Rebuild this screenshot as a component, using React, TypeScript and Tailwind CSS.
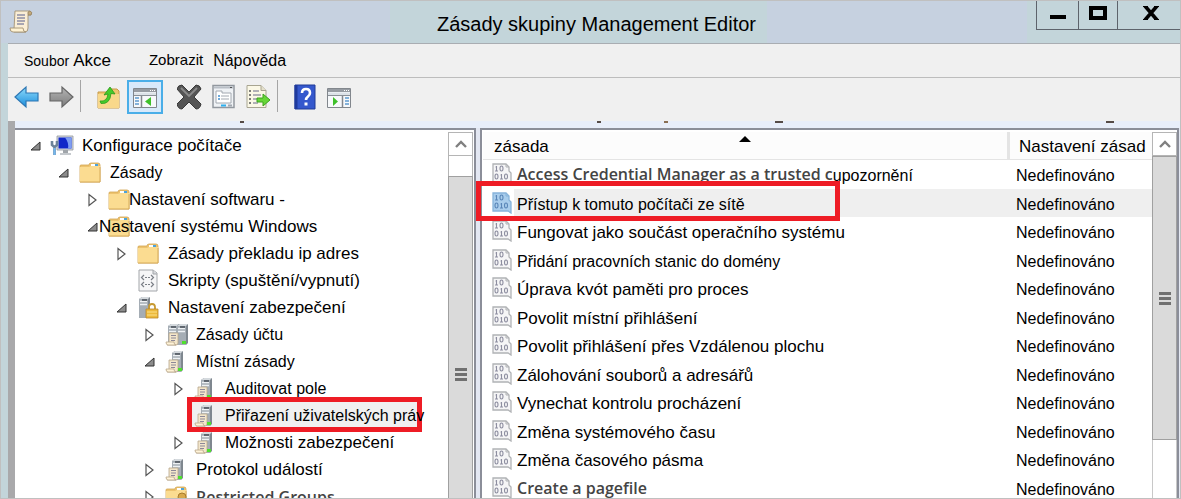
import type { ReactNode } from 'react';
import { clsx } from 'clsx';

type TreeIconName =
  | 'computer'
  | 'folder'
  | 'script'
  | 'lock'
  | 'servers'
  | 'server'
  | 'group';

interface TreeItem {
  label: string;
  icon: TreeIconName;
  level: string;
  state?: 'open' | 'closed';
  text?: string;
  selected?: boolean;
}

const english = "text-base font-semibold text-[#444] font-['Open_Sans',sans-serif]";

const treeItems: TreeItem[] = [
  { label: 'Konfigurace počítače', icon: 'computer', level: 'pl-[15px]', state: 'open', text: 'text-[17px]' },
  { label: 'Zásady', icon: 'folder', level: 'pl-[43px]', state: 'open' },
  { label: 'Nastavení softwaru -', icon: 'folder', level: 'pl-[72px]', state: 'closed', text: 'text-[17px] -ml-2.5' },
  { label: 'Nastavení systému Windows', icon: 'folder', level: 'pl-[72px]', state: 'open', text: 'text-[17px] -ml-10' },
  { label: 'Zásady překladu ip adres', icon: 'folder', level: 'pl-[101px]', state: 'closed', text: 'text-[17px]' },
  { label: 'Skripty (spuštění/vypnutí)', icon: 'script', level: 'pl-[101px]', text: 'text-[17px]' },
  { label: 'Nastavení zabezpečení', icon: 'lock', level: 'pl-[101px]', state: 'open', text: 'text-[17px]' },
  { label: 'Zásady účtu', icon: 'servers', level: 'pl-[129px]', state: 'closed' },
  { label: 'Místní zásady', icon: 'server', level: 'pl-[129px]', state: 'open' },
  { label: 'Auditovat pole', icon: 'server', level: 'pl-[158px]', state: 'closed' },
  { label: 'Přiřazení uživatelských práv', icon: 'server', level: 'pl-[158px]', selected: true },
  { label: 'Možnosti zabezpečení', icon: 'server', level: 'pl-[158px]', state: 'closed', text: 'text-[17px]' },
  { label: 'Protokol událostí', icon: 'server', level: 'pl-[129px]', state: 'closed', text: 'text-[17px]' },
  { label: 'Restricted Groups', icon: 'group', level: 'pl-[129px]', state: 'closed', text: english },
];

interface Policy {
  name: string;
  suffix?: string;
  text?: string;
  selected?: boolean;
}

const policies: Policy[] = [
  { name: 'Access Credential Manager as a trusted c', suffix: 'upozornění', text: english },
  { name: 'Přístup k tomuto počítači ze sítě', selected: true },
  { name: 'Fungovat jako součást operačního systému', text: 'pt-1 text-[17px]' },
  { name: 'Přidání pracovních stanic do domény' },
  { name: 'Úprava kvót paměti pro proces', text: 'pt-1 text-[17px]' },
  { name: 'Povolit místní přihlášení', text: 'pt-1 text-[17px]' },
  { name: 'Povolit přihlášení přes Vzdálenou plochu', text: 'pt-1 text-[17px]' },
  { name: 'Zálohování souborů a adresářů', text: 'pt-1 text-[17px]' },
  { name: 'Vynechat kontrolu procházení', text: 'pt-1 text-[17px]' },
  { name: 'Změna systémového času', text: 'pt-1 text-[17px]' },
  { name: 'Změna časového pásma', text: 'pt-1 text-[17px]' },
  { name: 'Create a pagefile', text: english },
];

const ServerTower = ({ x }: { x: number }) => (
  <g>
    <path d={`M${x} 3l3-2h8v19l-2 2h-9z`} fill="#7f878f" />
    <path d={`M${x} 3l3-2h8l-2 2z`} fill="#d5dade" />
    <path d={`M${x} 3h9v19h-9z`} fill="#a5adb5" />
    <path d={`M${x + 1} 5.500h7M${x + 1} 8.500h7`} stroke="#eef1f4" strokeWidth="1.6" />
    <path d={`M${x + 3} 4h5`} stroke="#3f474f" strokeWidth="1.4" />
  </g>
);

const PolicyScroll = () => (
  <g>
    <path d="M5 10h9v10q0 2-2 2H3q2-1 2-3z" fill="#f3e6cb" stroke="#b8a68a" strokeWidth=".8" />
    <path d="M2 19h8q0 3 2 3H4q-2 0-2-3z" fill="#fff3d8" stroke="#b8a68a" strokeWidth=".8" />
    <path d="M7 12.500h5M7 15h5M7 17.500h4" stroke="#8c8797" strokeWidth="1" />
  </g>
);

const FolderShape = () => (
  <g>
    <path d="M11 4q0-2 2-2h7q2 0 2 2v17H2V5q0-1 1-1z" fill="#edc36f" stroke="#d2a552" strokeWidth=".8" />
    <path d="M2 6h9l2-1h9v16H2z" fill="#fbdc91" />
    <path d="M13 3h7v2h-7z" fill="#fff" />
    <path d="M17 3h3v2h-3z" fill="#4ba3dc" />
    <path d="M2 21h20V6" fill="none" stroke="#d2a552" strokeWidth=".9" />
  </g>
);

const treeIcons: Record<TreeIconName, ReactNode> = {
  computer: (
    <g>
      <path d="M7 2h16v14H7z" fill="#d9dcdf" stroke="#8f959b" strokeWidth=".8" />
      <path d="M8.500 3.500h13v11h-13z" fill="#1127c9" />
      <path d="M15 3.500h6.500v11H18q1-6-3-11z" fill="#7d9df2" />
      <path d="M13 16h5v3h-5z" fill="#a0a5aa" />
      <path d="M10 19h11v2H10z" fill="#c5c9cd" />
      <path d="M2 7v4l2.500 2L7 11V7M4.500 12v9" fill="none" stroke="#6d8399" strokeWidth="2.600" />
      <path d="M4.500 14v7" stroke="#74b7ed" strokeWidth="2.200" />
    </g>
  ),
  folder: <FolderShape />,
  script: (
    <g>
      <path d="M3 1h14l4 3v18H3z" fill="#f6f6f7" stroke="#a3a6aa" />
      <path d="M17 1v4h4" fill="#d8dadd" stroke="#a3a6aa" />
      <path d="M8 6L5.500 8.500 8 11M15 6l2.500 2.500L15 11M8 13l-2.500 2.500L8 18M15 13l2.500 2.500L15 18" fill="none" stroke="#7b7f86" strokeWidth="1.200" />
      <path d="M9 8.500h5M9 15.500h5" stroke="#7b7f86" strokeDasharray="2 1" />
    </g>
  ),
  lock: (
    <g>
      <ServerTower x={3} />
      <path d="M13 14v-3q0-3 3-3t3 3v3" fill="none" stroke="#c79a32" strokeWidth="1.800" />
      <path d="M10 13h12v9H10z" fill="#edba3c" stroke="#b9862a" strokeWidth=".8" />
      <path d="M11 16h10M11 19h10" stroke="#fbe08a" />
    </g>
  ),
  servers: (
    <g>
      <ServerTower x={4} />
      <ServerTower x={13} />
      <PolicyScroll />
      <path d="M18 18h4v3h-4z" fill="#4ee02d" />
    </g>
  ),
  server: (
    <g>
      <ServerTower x={8} />
      <PolicyScroll />
      <path d="M14 18h4v3h-4z" fill="#4ee02d" />
    </g>
  ),
  group: (
    <g>
      <FolderShape />
      <circle cx="18" cy="12" r="4" fill="#d9a94b" stroke="#a97b2c" />
    </g>
  ),
};

const Expander = ({ state }: { state?: 'open' | 'closed' }) => (
  <svg viewBox="0 0 12 14" className="h-[14px] w-3 flex-none">
    {state === 'open' && <path d="M10 3v8H1z" fill="#8c8c8c" stroke="#333" />}
    {state === 'closed' && (
      <path d="M2 1.500v11L9 7z" fill="#fff" stroke="#555" strokeWidth="1.200" />
    )}
  </svg>
);

const PolicyIcon = ({ selected }: { selected?: boolean }) => (
  <svg viewBox="0 0 20 22" className="h-[22px] w-5 flex-none">
    <path
      d="M1 1h13l3 3v4l2 2v11l-3-2H1z"
      fill={selected ? '#a9cdec' : '#f5f5f6'}
      stroke={selected ? '#86b3da' : '#b0b2b5'}
      strokeWidth="1.300"
    />
    <path d="M14 1v3h3" fill="none" stroke={selected ? '#86b3da' : '#b0b2b5'} />
    <g fill="none" stroke={selected ? '#5a86b8' : '#8d8ea0'} strokeWidth="1.100">
      <path d="M4.500 3v5M3.500 4h1M3 8h3" />
      <ellipse cx="9.500" cy="5.500" rx="1.500" ry="2.500" />
      <ellipse cx="4.500" cy="13.500" rx="1.500" ry="2.500" />
      <path d="M9.500 11v5M8.500 12h1M8 16h3" />
      <ellipse cx="14" cy="13.500" rx="1.500" ry="2.500" />
    </g>
  </svg>
);

const TitleScroll = () => (
  <svg viewBox="0 0 24 24" className="h-6 w-6 flex-none">
    <path d="M6 1h15q2 1 1 4h-3v13q0 4-3 4H5q-1-1 0-3z" fill="#faeed6" stroke="#a39274" strokeWidth=".9" />
    <path d="M19 5q-1-4 2-4 3 1 1 4z" fill="#c4ab7d" stroke="#8f7d5d" strokeWidth=".7" />
    <path d="M1 18h13q0 4 3 4H4q-3 0-3-4z" fill="#fff2d2" stroke="#a39274" strokeWidth=".9" />
    <path d="M8 5h8M8 8h8M8 11h8M8 14h7" stroke="#8d8fa6" strokeWidth="1.300" />
  </svg>
);

const ToolSvg = ({ children }: { children: ReactNode }) => (
  <svg viewBox="0 0 26 26" className="h-[26px] w-[26px]">
    {children}
  </svg>
);

const BackIcon = () => (
  <ToolSvg>
    <defs>
      <linearGradient id="back" x1="0" y1="0" x2="0" y2="1">
        <stop offset="0" stopColor="#8fdcfb" />
        <stop offset="1" stopColor="#1b8ddc" />
      </linearGradient>
    </defs>
    <path d="M1 13L12 3v6h12v8H12v6z" fill="url(#back)" stroke="#2d77b4" strokeWidth="1.200" />
  </ToolSvg>
);

const ForwardIcon = () => (
  <ToolSvg>
    <defs>
      <linearGradient id="forward" x1="0" y1="0" x2="0" y2="1">
        <stop offset="0" stopColor="#b5b5b5" />
        <stop offset="1" stopColor="#7c7c7c" />
      </linearGradient>
    </defs>
    <path d="M25 13L14 3v6H2v8h12v6z" fill="url(#forward)" stroke="#666" strokeWidth="1.200" />
  </ToolSvg>
);

const UpFolderIcon = () => (
  <ToolSvg>
    <path d="M3 8h9l2-3h8l2 2v17H3z" fill="#eec56f" stroke="#c69a48" />
    <path d="M3 10h21v14H3z" fill="#f9d88b" />
    <path d="M5 17q7 1 8-7l-4 1 6-8 5 7-4-.5q-1 11-10 10z" fill="#45cb2c" stroke="#2b9a1b" strokeWidth=".8" />
  </ToolSvg>
);

const TreeWindowIcon = ({ flipped }: { flipped?: boolean }) => (
  <ToolSvg>
    <path d="M1.500 4.500h23v19h-23z" fill="#f7f9fb" stroke="#82878d" />
    <path d="M2 5h22v3H2z" fill="#969ba2" />
    <path d="M18 6.500h1M20 6.500h1M22 6.500h1" stroke="#fff" />
    <path d="M2 8.500h22v3H2z" fill="#dce2e8" />
    <path d="M2 11.500h22" stroke="#8a9097" />
    {flipped ? (
      <g>
        <path d="M16.500 12v11" stroke="#82878d" strokeWidth="1.500" />
        <path d="M19 14h4M19 17h4M19 20h4" stroke="#5f9bd0" strokeWidth="1.500" />
        <path d="M7 13v9l5-4.500z" fill="#3fc02b" />
      </g>
    ) : (
      <g>
        <path d="M9.500 12v11" stroke="#82878d" strokeWidth="1.500" />
        <path d="M3 14h4M3 17h4M3 20h4" stroke="#5f9bd0" strokeWidth="1.500" />
        <path d="M19 13v9l-6-4.500z" fill="#3fc02b" />
      </g>
    )}
  </ToolSvg>
);

const DeleteIcon = () => (
  <ToolSvg>
    <path
      d="M5 1l7 7 7-7q4 0 5 4l-7 8 7 7q-1 5-5 5l-7-7-7 7q-4 0-5-5l7-7-7-8q1-4 5-4z"
      fill="#555"
      stroke="#3a3a3a"
      strokeLinejoin="round"
    />
    <path d="M4 4l8 8 8-8" fill="none" stroke="#8b8b8b" strokeWidth="1.800" />
  </ToolSvg>
);

const PropertiesIcon = () => (
  <ToolSvg>
    <path d="M2 1.500h21v22H2z" fill="#eff2f5" stroke="#92989f" strokeWidth="1.500" />
    <path d="M3 3.500h19" stroke="#b9bfc6" strokeWidth="2" />
    <path d="M19 3.500h2" stroke="#555" />
    <path d="M5 7h6v2h9v10H5z" fill="#fff" stroke="#a2a8b0" />
    <path d="M7 12h2M7 15h2" stroke="#3f8fd0" strokeWidth="1.500" />
    <path d="M10 12h8M10 15h8" stroke="#a2a8b0" />
    <path d="M10 21.500h5" stroke="#2fb1ef" strokeWidth="2" />
    <path d="M17 21.500h4" stroke="#a2a8b0" strokeWidth="2" />
  </ToolSvg>
);

const ExportIcon = () => (
  <ToolSvg>
    <path d="M2 1.500h14l5 5v17H2z" fill="#fbf8e6" stroke="#a8a591" />
    <path d="M16 1.500v5h5" fill="#e4e0cb" stroke="#a8a591" />
    <path d="M4 7h2M4 11h2M4 15h2M4 19h2" stroke="#555" strokeWidth="1.500" />
    <path d="M8 7h6M8 11h8M8 15h5M8 19h5" stroke="#9b99a6" strokeWidth="1.300" />
    <path d="M12 14h6v-4l7 6-7 6v-4h-6z" fill="#66d636" stroke="#3ca41f" />
  </ToolSvg>
);

const HelpIcon = () => (
  <ToolSvg>
    <path d="M3 1h20v24H3z" fill="#3558cd" stroke="#203a96" />
    <path d="M4 1v24" stroke="#1f3a9d" strokeWidth="3" />
    <path d="M10 9q0-4 4-4t4 4q0 2-2 3.500T14 16" fill="none" stroke="#fff" strokeWidth="2.600" />
    <path d="M12.500 18.500h3v3h-3z" fill="#fff" />
  </ToolSvg>
);

const ToolButton = ({
  label,
  active,
  children,
}: {
  label: string;
  active?: boolean;
  children: ReactNode;
}) => (
  <button
    type="button"
    aria-label={label}
    className={clsx(
      'flex h-[34px] flex-none items-center justify-center',
      active ? 'w-9 border-2 border-[#4aaee8] bg-[#d8e9fa]' : 'w-[34px]',
    )}
  >
    {children}
  </button>
);

const Separator = () => <div className="mr-[10px] ml-0.5 h-8 w-px flex-none bg-[#a5a5a5]" />;

const ScrollArrow = () => (
  <button
    type="button"
    aria-label="Nahoru"
    className="flex h-6 flex-none items-center justify-center border border-[#b5b5b5] bg-white"
  >
    <svg viewBox="0 0 12 8" className="h-2 w-3">
      <path d="M1 7l5-5 5 5" fill="none" stroke="#808080" strokeWidth="2.400" />
    </svg>
  </button>
);

const Grip = () => (
  <div className="flex w-3 flex-col gap-0.5">
    <div className="h-[3px] bg-[#707070]" />
    <div className="h-[3px] bg-[#707070]" />
    <div className="h-[3px] bg-[#707070]" />
  </div>
);

const TreeRow = ({ item }: { item: TreeItem }) => (
  <li className={clsx('relative flex h-[27px] items-center whitespace-nowrap', item.level)}>
    {item.selected && (
      <div className="absolute -top-[5px] left-[172px] h-[35px] w-[235px] border-5 border-[#ee1c25] bg-[#f0f0f0]" />
    )}
    <Expander state={item.state} />
    <svg viewBox="0 0 24 24" className="relative ml-2 h-6 w-6 flex-none">
      {treeIcons[item.icon]}
    </svg>
    <span className={clsx('relative pl-2', item.text ?? 'text-base')}>{item.label}</span>
  </li>
);

const PolicyTree = () => (
  <div className="flex w-[468px] flex-none border-l-[7px] border-[#a9a9ab] bg-white">
    <ul className="min-w-0 flex-1 border-t-2 border-[#8b8e99] pt-0.5">
      {treeItems.map((item) => (
        <TreeRow key={item.label} item={item} />
      ))}
    </ul>
    <div className="flex w-7 flex-none flex-col border-t-2 border-r-2 border-[#8b8e99] pt-0.5 pr-px">
      <ScrollArrow />
      <div className="h-5 flex-none border-x border-[#b5b5b5] bg-white" />
      <div className="flex flex-1 items-center justify-center border border-b-0 border-[#a0a0a0] bg-[#dadada] pt-[74px]">
        <Grip />
      </div>
    </div>
  </div>
);

const PolicyList = () => (
  <div className="flex min-w-0 flex-1 border-2 border-b-0 border-[#8b8e99] bg-white pt-0.5">
    <div className="min-w-0 flex-1 pl-px">
      <table className="w-full table-fixed border-separate border-spacing-0 text-left whitespace-nowrap">
        <thead>
          <tr className="h-7">
            <th className="relative border-r-3 border-b border-[#e4e4e4] bg-[#fcfcfc] p-0 pt-[3px] pl-[11px] text-[17px] leading-6 font-normal">
              zásada
              <svg viewBox="0 0 12 6" className="absolute top-1 left-1/2 -ml-1.5 h-1.5 w-3">
                <path d="M0 6l6-6 6 6z" fill="#000" />
              </svg>
            </th>
            <th className="w-[142px] border-b border-[#e4e4e4] bg-[#fcfcfc] p-0 pt-[3px] pl-[9px] text-[17px] leading-6 font-normal">
              Nastavení zásad
            </th>
          </tr>
        </thead>
        <tbody>
          {policies.map((policy) => (
            <tr key={policy.name} className="odd:h-7 even:h-[29px]">
              <td className="relative p-0">
                {policy.selected && (
                  <div className="absolute -top-[7px] -left-[7px] z-10 h-10 w-[364px] border-5 border-[#ee1c25]" />
                )}
                <div className="flex h-7 items-center pl-[9px]">
                  <PolicyIcon selected={policy.selected} />
                  <div
                    className={clsx(
                      'ml-0.5 flex h-full flex-1 items-center pl-[3px]',
                      policy.selected && 'bg-[#efefef]',
                    )}
                  >
                    <span className={policy.text ?? 'pt-1 text-base'}>{policy.name}</span>
                    {policy.suffix && <span className="pt-1 text-base">{policy.suffix}</span>}
                  </div>
                </div>
              </td>
              <td className="p-0">
                <div
                  className={clsx(
                    'flex h-7 items-center pt-1 pl-[6px] text-base',
                    policy.selected && 'bg-[#efefef]',
                  )}
                >
                  Nedefinováno
                </div>
              </td>
            </tr>
          ))}
        </tbody>
      </table>
    </div>
    <div className="flex w-[25px] flex-none flex-col">
      <ScrollArrow />
      <div className="flex h-[284px] flex-none items-center justify-center border border-[#a0a0a0] bg-[#dadada]">
        <Grip />
      </div>
      <div className="flex-1 border-x border-[#c8c8c8] bg-white" />
    </div>
  </div>
);

export default function App() {
  return (
    <div className="flex h-screen flex-col overflow-hidden border border-[#c0c0c0] bg-[#c3d5da] font-['Liberation_Sans',Arial,sans-serif] text-black">
      <header className="flex h-[42px] flex-none items-center bg-[linear-gradient(to_right,#c6d1e0_33%,#c3d5da_33%,#c3d5da_65%,#c6d1e0_65%,#c6d1e0_87%,#c3d5da_87%)] pl-2">
        <TitleScroll />
        <h1 className="flex-1 pt-1 pl-[124px] text-center text-xl">Zásady skupiny Management Editor</h1>
        <div className="flex h-[29px] w-[144px] flex-none self-start border-b border-l border-[#5d636b] bg-[#c3d5da]">
          <button type="button" aria-label="Minimalizovat" className="flex w-[42px] justify-center border-r border-[#5d636b] pt-[14px]">
            <span className="h-1 w-4 bg-black" />
          </button>
          <button type="button" aria-label="Maximalizovat" className="flex w-[39px] justify-center border-r border-[#5d636b] pt-[5px]">
            <span className="h-[14px] w-[18px] border-4 border-black" />
          </button>
          <button type="button" aria-label="Zavřít" className="flex flex-1 justify-center pt-[5px] pl-1">
            <svg viewBox="0 0 16 14" className="h-[14px] w-4">
              <path d="M2 0l12 14M14 0L2 14" stroke="#000" strokeWidth="3.600" />
              <path d="M0 .5h5M11 .5h5M0 13.500h5M11 13.500h5" stroke="#000" />
            </svg>
          </button>
        </div>
      </header>

      <div className="flex min-h-0 flex-1 flex-col pl-[7px]">
        <nav className="flex h-[35px] flex-none items-center border-t border-b border-t-[#a9adb2] border-b-[#bdbdbd] bg-[#f0f0f0] pl-4">
          <button type="button" className="text-sm">Soubor</button>
          <button type="button" className="pl-1 text-[17px]">Akce</button>
          <button type="button" className="pl-[38px] text-[15px]">Zobrazit</button>
          <button type="button" className="pl-[10px] text-base">Nápověda</button>
        </nav>

        <div className="flex h-[43px] flex-none items-start bg-[#f0f0f0] pt-0.5 pl-0.5">
          <ToolButton label="Zpět"><BackIcon /></ToolButton>
          <ToolButton label="Vpřed"><ForwardIcon /></ToolButton>
          <Separator />
          <ToolButton label="O úroveň výš"><UpFolderIcon /></ToolButton>
          <div className="mr-2.5 ml-0.5">
            <ToolButton label="Strom konzoly" active><TreeWindowIcon /></ToolButton>
          </div>
          <ToolButton label="Odstranit"><DeleteIcon /></ToolButton>
          <ToolButton label="Vlastnosti"><PropertiesIcon /></ToolButton>
          <ToolButton label="Exportovat seznam"><ExportIcon /></ToolButton>
          <Separator />
          <ToolButton label="Nápověda k modulu"><HelpIcon /></ToolButton>
          <ToolButton label="Podokno akcí"><TreeWindowIcon flipped /></ToolButton>
        </div>

        <div className="relative h-[7px] flex-none bg-[#e8eefa]">
          <div className="h-full w-[7px] bg-[#a9a9ab]" />
          <span className="absolute top-0 left-[232px] h-0.5 w-1 bg-[#554b48]" />
          <span className="absolute top-0 left-[589px] h-0.5 w-1 bg-[#554b48]" />
          <span className="absolute top-0 left-[656px] h-0.5 w-1 bg-[#8a6f55]" />
          <span className="absolute top-0 left-[767px] h-0.5 w-2 bg-[#554b48]" />
          <span className="absolute top-0 left-[1098px] h-0.5 w-2 bg-[#554b48]" />
        </div>

        <main className="flex min-h-0 flex-1 gap-1 bg-[#e3e7f2] pr-px">
          <PolicyTree />
          <PolicyList />
        </main>
      </div>
    </div>
  );
}
